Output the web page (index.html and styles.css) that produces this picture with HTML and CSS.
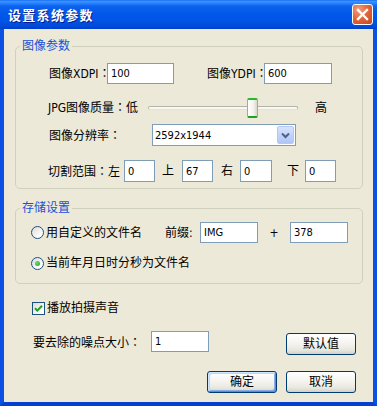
FILE: index.html
```html
<!DOCTYPE html>
<html>
<head>
<meta charset="utf-8">
<title>设置系统参数</title>
<link rel="stylesheet" href="styles.css">
</head>
<body>
<div class="window">
  <div class="titlebar">
    <span class="title">设置系统参数</span>
    <span class="close">
      <svg width="19" height="19" viewBox="0 0 19 19"><path d="M5 5 L14 14 M14 5 L5 14" stroke="#fff" stroke-width="2.4" stroke-linecap="square"/></svg>
    </span>
  </div>
  <div class="client">
    <fieldset class="group g1">
      <legend>图像参数</legend>
      <div class="gbody">
        <div class="row r1">
          <span class="lbl w58">图像XDPI<span class="colon">：</span></span>
          <input class="tb w67" type="text" value="100">
          <span class="lbl w57 ml33">图像YDPI<span class="colon">：</span></span>
          <input class="tb w68" type="text" value="600">
        </div>
        <div class="row r2">
          <span class="lbl w100 mln1">JPG图像质量<span class="colon">：</span>低</span>
          <div class="slider">
            <div class="track"></div>
            <div class="thumb"></div>
          </div>
          <span class="lbl ml17">高</span>
        </div>
        <div class="row r3">
          <span class="lbl w103">图像分辨率<span class="colon">：</span></span>
          <div class="combo">
            <span class="combo-text">2592x1944</span>
            <span class="combo-btn"><svg width="15" height="18" viewBox="0 0 15 18"><path d="M4 7.5 L7.5 11 L11 7.5" fill="none" stroke="#4D6185" stroke-width="2"/></svg></span>
          </div>
        </div>
        <div class="row r4">
          <span class="lbl w76 mln1">切割范围<span class="colon">：</span>左</span>
          <input class="tb w31" type="text" value="0">
          <span class="lbl w20 ml7">上</span>
          <input class="tb w31" type="text" value="67">
          <span class="lbl w19 ml8">右</span>
          <input class="tb w32" type="text" value="0">
          <span class="lbl w18 ml15">下</span>
          <input class="tb w31" type="text" value="0">
        </div>
      </div>
    </fieldset>

    <fieldset class="group g2">
      <legend>存储设置</legend>
      <div class="gbody">
        <div class="row s1">
          <span class="opt w134"><span class="radio"></span><span class="opt-text">用自定义的文件名</span></span>
          <span class="lbl w35">前缀:</span>
          <input class="tb w58" type="text" value="IMG">
          <span class="plus">+</span>
          <input class="tb w58" type="text" value="378">
        </div>
        <div class="row s2">
          <span class="opt"><span class="radio on"></span><span class="opt-text ml1">当前年月日时分秒为文件名</span></span>
        </div>
      </div>
    </fieldset>

    <div class="row chkrow">
      <span class="check"><svg width="11" height="11" viewBox="0 0 11 11"><path d="M2 5.2 L4.3 7.6 L9 2.8" fill="none" stroke="#21A121" stroke-width="2"/></svg></span>
      <span class="opt-text">播放拍摄声音</span>
    </div>

    <div class="row noise">
      <span class="lbl w118">要去除的噪点大小<span class="colon">：</span></span>
      <input class="tb w58" type="text" value="1">
      <span class="btn ml77 mt2">默认值</span>
    </div>

    <div class="row btnrow">
      <span class="btn default">确定</span>
      <span class="btn">取消</span>
    </div>
  </div>
</div>
</body>
</html>
```

FILE: styles.css
```css
* { box-sizing: border-box; }
html, body { margin: 0; padding: 0; }
body {
  width: 377px;
  height: 406px;
  overflow: hidden;
  background: #ECE9D8;
  font: 12px/14px "DejaVu Sans Condensed", "Noto Sans CJK SC", sans-serif;
  color: #000;
}
.window {
  width: 377px;
  height: 406px;
  display: flex;
  flex-direction: column;
}
.titlebar {
  height: 29px;
  flex: none;
  display: flex;
  align-items: center;
  justify-content: space-between;
  padding: 0 4px 0 8px;
  background: linear-gradient(#0A5FEE 0, #3D95FF 1px, #2C86FE 3px, #0D62EE 6px, #0058EA 14px, #0054E6 20px, #004BDB 26px, #0040C9 29px);
}
.title {
  color: #fff;
  font-family: "Noto Sans CJK SC", sans-serif;
  font-weight: bold;
  font-size: 13px;
  line-height: 16px;
  letter-spacing: 1.3px;
  text-shadow: 1px 1px 0 #0A1A8A;
}
.close {
  width: 21px;
  height: 21px;
  border: 1px solid #fff;
  border-radius: 3px;
  background: radial-gradient(circle at 30% 25%, #F0A07E 0, #E2663C 45%, #C6451B 100%);
  display: flex;
  align-items: center;
  justify-content: center;
}
.client {
  flex: 1;
  background: #ECE9D8;
  border-left: 4px solid #0B52E2;
  border-right: 4px solid #0B52E2;
  border-bottom: 4px solid #0640CF;
  padding-top: 10px;
  display: flex;
  flex-direction: column;
}
.group {
  margin: 0 10px 0 11px;
  padding: 0;
  border: 1px solid #D0D0BF;
  border-radius: 5px;
  min-width: 0;
}
.group legend {
  margin-left: 4px;
  padding: 0 2px;
  color: #1B4FD6;
  line-height: 14px;
}
.g1 .gbody { padding: 10px 0 6px 33px; }
.g2 { margin-top: 12px; }
.g2 .gbody { padding: 7px 0 10px 15px; }

.row { display: flex; align-items: center; }
.lbl { flex: none; white-space: nowrap; }
.colon { font-family: "Noto Sans CJK JP", "Noto Sans CJK TC", sans-serif; }
.r1 { height: 21px; }
.r2 { height: 21px; margin-top: 13px; }
.r3 { height: 22px; margin-top: 6px; }
.r4 { height: 22px; margin-top: 14px; }
.s1 { height: 21px; }
.s2 { height: 20px; margin-top: 10px; }

.w18 { width: 18px; } .w19 { width: 19px; } .w20 { width: 20px; }
.w31 { width: 31px; } .w32 { width: 32px; } .w35 { width: 35px; }
.w57 { width: 57px; } .w58 { width: 58px; } .w67 { width: 67px; }
.w68 { width: 68px; } .w76 { width: 76px; } .w100 { width: 100px; }
.w103 { width: 103px; } .w118 { width: 118px; } .w134 { width: 134px; }
.ml1 { margin-left: 1px; } .ml7 { margin-left: 7px; } .ml8 { margin-left: 8px; }
.ml15 { margin-left: 15px; } .ml17 { margin-left: 17px; } .ml33 { margin-left: 33px; }
.ml77 { margin-left: 77px; } .mln1 { margin-left: -1px; } .mt2 { margin-top: 2px; }

.tb {
  flex: none;
  height: 21px;
  margin: 0;
  border: 1px solid #7F9DB9;
  border-radius: 0;
  background: #fff;
  padding: 0 3px;
  font: 11px "DejaVu Sans Condensed", "DejaVu Sans", sans-serif;
  color: #000;
  outline: none;
}
.r4 .tb { height: 22px; }

.slider {
  position: relative;
  width: 150px;
  height: 21px;
  flex: none;
}
.track {
  position: absolute;
  left: 0;
  right: 0;
  top: 9px;
  height: 4px;
  border: 1px solid #B4B3A8;
  border-bottom-color: #E2E1DA;
  border-radius: 2px;
  background: #F7F7F3;
}
.thumb {
  position: absolute;
  left: 99px;
  top: 1px;
  width: 11px;
  height: 20px;
  border: 1px solid #A8A79C;
  border-top: 2px solid #27B92B;
  border-bottom: 2px solid #21A121;
  border-radius: 2px;
  background: linear-gradient(90deg, #FFFFFF, #F3F2EC 60%, #D8D6CA);
}

.combo {
  flex: none;
  width: 144px;
  height: 22px;
  border: 1px solid #7F9DB9;
  background: #fff;
  display: flex;
  align-items: center;
  justify-content: space-between;
  padding: 1px;
}
.combo-text {
  padding-left: 1px;
  font: 11px "DejaVu Sans Condensed", "DejaVu Sans", sans-serif;
}
.combo-btn {
  width: 17px;
  height: 18px;
  border: 1px solid #B4C8F5;
  border-radius: 2px;
  background: linear-gradient(#D8E4FE, #C1D3FB 50%, #B1C6F6);
  display: flex;
  align-items: center;
  justify-content: center;
}

.opt { display: flex; align-items: center; flex: none; }
.opt-text { margin-left: 2px; white-space: nowrap; }
.radio {
  width: 13px;
  height: 13px;
  flex: none;
  border-radius: 50%;
  border: 1px solid #1C5180;
  background: linear-gradient(135deg, #DCDBD3, #FFFFFF 80%);
  display: flex;
  align-items: center;
  justify-content: center;
}
.radio.on::after {
  content: "";
  width: 5px;
  height: 5px;
  border-radius: 50%;
  background: radial-gradient(circle at 35% 35%, #6EDC6E, #21A121);
}
.plus {
  width: 32px;
  flex: none;
  text-align: center;
}

.chkrow {
  height: 18px;
  margin: 15px 0 0 28px;
}
.check {
  width: 13px;
  height: 13px;
  flex: none;
  border: 1px solid #1C5180;
  background: linear-gradient(135deg, #DCDBD3, #FFFFFF 80%);
  display: flex;
  align-items: center;
  justify-content: center;
}

.noise {
  height: 24px;
  margin: 14px 0 0 29px;
  align-items: flex-start;
}
.noise .lbl { line-height: 21px; }

.btn {
  flex: none;
  width: 70px;
  height: 22px;
  border: 1px solid #003C74;
  border-radius: 3px;
  background: linear-gradient(#FFFFFF, #F5F4EF 45%, #E8E7DF 80%, #D6D0C5);
  display: flex;
  align-items: center;
  justify-content: center;
  line-height: 14px;
}
.btn.default {
  box-shadow: inset 1px 1px 0 #CEE7FF, inset -1px -1px 0 #6982EE, inset 2px 2px 0 #BCD4F6, inset -2px -2px 0 #89ADE4;
}
.btnrow {
  margin-top: 16px;
  justify-content: flex-end;
  gap: 9px;
  padding-right: 17px;
}
```
